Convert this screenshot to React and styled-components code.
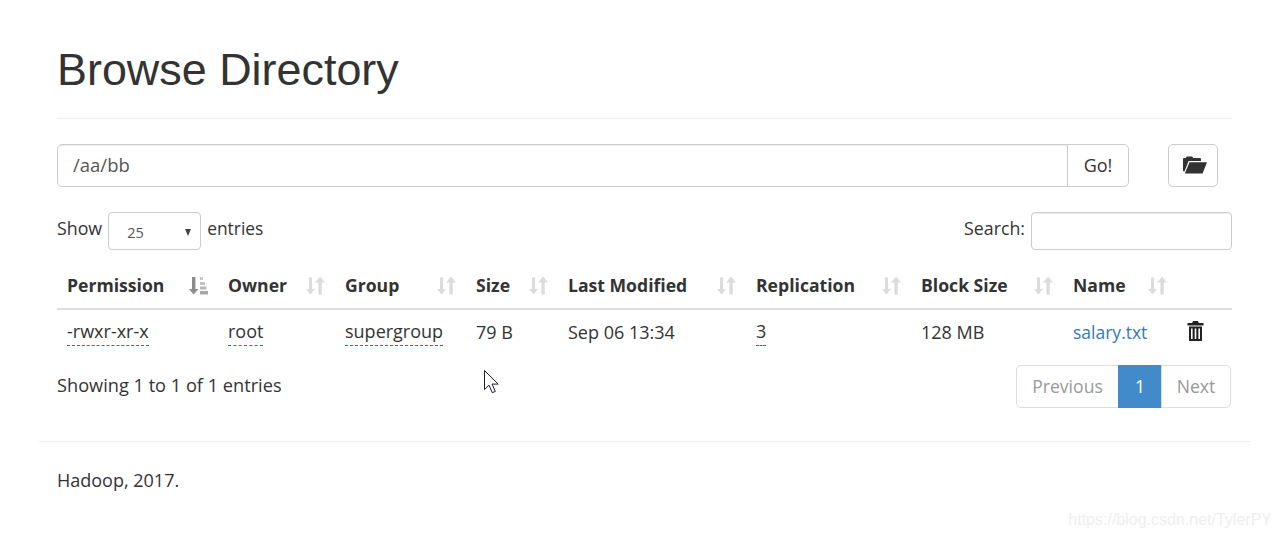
import React from 'react';
import styled, { createGlobalStyle } from 'styled-components';

const GlobalStyle = createGlobalStyle`
  * { box-sizing: border-box; }
  html, body { margin: 0; padding: 0; background: #fff; }
  body {
    font-family: "Open Sans", "Noto Sans", sans-serif;
    font-size: 18px;
    line-height: 25px;
    color: #333;
    height: 538px;
    overflow: hidden;
  }
`;

const Page = styled.div`
  position: relative;
  width: 1281px;
  height: 538px;
  padding: 0 31px 0 39px;
`;

const Content = styled.div`
  padding: 0 18px;
`;

const PageHeader = styled.div`
  padding-top: 39px;
  height: 119px;
  border-bottom: 1px solid #eee;
`;

const Title = styled.h1`
  margin: 0;
  font-family: "Liberation Sans", Arial, sans-serif;
  font-size: 44.9px;
  font-weight: 400;
  line-height: 62px;
  color: #333;
`;

const PathRow = styled.div`
  display: flex;
  margin-top: 25px;
  height: 43px;
`;

const PathInput = styled.div`
  flex: 0 0 1011px;
  padding: 7px 15px;
  border: 1px solid #ccc;
  border-radius: 5px 0 0 5px;
  box-shadow: inset 0 1px 1px rgba(0, 0, 0, 0.075);
  color: #555;
  font-size: 18.5px;
`;

const Button = styled.div`
  display: flex;
  align-items: center;
  justify-content: center;
  border: 1px solid #ccc;
  background: #fff;
`;

const GoButton = styled(Button)`
  width: 62px;
  margin-left: -1px;
  border-radius: 0 5px 5px 0;
`;

const FolderButton = styled(Button)`
  width: 50px;
  margin-left: 39px;
  padding-left: 4px;
  padding-bottom: 2px;
  border-radius: 5px;
`;

const Controls = styled.div`
  display: flex;
  justify-content: space-between;
  align-items: center;
  margin-top: 25px;
  height: 38px;
`;

const Group = styled.div`
  display: flex;
  align-items: center;
  gap: 6px;
`;

const Label = styled.span`
  padding-bottom: 6px;
  font-size: ${(p) => p.$size || 17.8}px;
`;

const Select = styled.div`
  display: flex;
  align-items: center;
  justify-content: space-between;
  width: 93px;
  height: 38px;
  padding: 3px 9px 0 18px;
  border: 1px solid #ccc;
  border-radius: 4px;
  font-size: 14.5px;
  color: #555;
`;

const Caret = styled.span`
  width: 0;
  height: 0;
  border-left: 3.5px solid transparent;
  border-right: 3.5px solid transparent;
  border-top: 7px solid #444;
`;

const SearchBox = styled.div`
  width: 201px;
  height: 38px;
  border: 1px solid #ccc;
  border-radius: 4px;
  box-shadow: inset 0 1px 1px rgba(0, 0, 0, 0.075);
`;

const Table = styled.table`
  width: 1175px;
  margin-top: 15px;
  border-collapse: collapse;
  table-layout: fixed;
`;

const Th = styled.th`
  height: 44px;
  padding: 0 10px 2px;
  border-bottom: 2px solid #ddd;
  text-align: left;
  font-size: 17.6px;
  font-weight: 700;
`;

const ThInner = styled.div`
  display: flex;
  align-items: center;
  justify-content: space-between;
`;

const Td = styled.td`
  height: 49px;
  padding: 0 10px 4px;
  white-space: nowrap;
`;

const IconTd = styled(Td)`
  padding-bottom: 0;
`;

const Dotted = styled.span`
  display: inline-block;
  line-height: 23px;
  padding-bottom: 2px;
  border-bottom: 1px dashed #2a6f9f;
`;

const FileLink = styled.span`
  font-size: 17.5px;
  color: #337ab7;
`;

const Footer = styled.div`
  display: flex;
  justify-content: space-between;
  align-items: flex-start;
  margin-top: 7px;
`;

const Info = styled.div`
  padding-top: 8px;
  font-size: 18.2px;
`;

const Pagination = styled.div`
  display: flex;
  height: 43px;
  margin-right: 1px;
  font-size: 17.6px;
`;

const PageItem = styled.div`
  display: flex;
  align-items: center;
  justify-content: center;
  width: ${(p) => p.$w}px;
  margin-left: -1px;
  border: 1px solid ${(p) => (p.$active ? '#428bca' : '#ddd')};
  border-radius: ${(p) => p.$radius || '0'};
  background: ${(p) => (p.$active ? '#428bca' : '#fff')};
  color: ${(p) => (p.$active ? '#fff' : '#999')};
`;

const Divider = styled.hr`
  margin: 33px 0 0;
  border: 0;
  border-top: 1px solid #eee;
`;

const Copyright = styled.p`
  margin: 26px 18px 0;
`;

const Cursor = styled.svg`
  position: absolute;
  left: 483px;
  top: 369px;
`;

const Watermark = styled.div`
  position: absolute;
  right: 9px;
  top: 508px;
  font-family: "Liberation Sans", Arial, sans-serif;
  font-size: 16px;
  line-height: 24px;
  color: #eeeeee;
`;

const SortIcon = ({ active }) => (
  <svg width="19" height="19" viewBox="0 0 19 19" style={{ flex: 'none' }}>
    {active ? (
      <g>
        <path fill="#8c8c8c" d="M3 1h3.400v12h3L4.700 18.500 0 13h3z" />
        <rect x="11" y="1" width="3" height="3" fill="#c8c8c8" />
        <rect x="11" y="6" width="5" height="3" fill="#c0c0c0" />
        <rect x="11" y="10.500" width="6.500" height="3" fill="#b8b8b8" />
        <rect x="11" y="15" width="8" height="3.500" fill="#a8a8a8" />
      </g>
    ) : (
      <g fill="#dcdcdc">
        <path d="M3 1.500h3v11.500h3L4.500 18.500 0 13h3z" />
        <path d="M14 .5L19 6.500h-3.200v12h-3.400v-12H9.200z" />
      </g>
    )}
  </svg>
);

const FolderIcon = () => (
  <svg width="24" height="18" viewBox="0 0 24 18">
    <path
      fill="#333"
      d="M0 3.200C0 2.500.5 2 1.200 2h1.600L3.800.5h5.400l1 1.500h6.600c.7 0 1.200.5 1.200 1.200V5H5.600L1.500 15.500 0 15zM6.500 6.300H24L19.600 17.500H1.800z"
    />
  </svg>
);

const TrashIcon = () => (
  <svg width="17" height="20" viewBox="0 0 17 20">
    <path
      fill="#222"
      fillRule="evenodd"
      d="M6 0h5l.8 2H16.500v2.500H.5V2h4.700zM2 5.500h13V19.200c0 .5-.3.800-.8.800H2.800c-.5 0-.8-.3-.8-.8zM4 7.500v10.500h1.600V7.500zM7.700 7.500v10.500h1.600V7.500zM11.400 7.500v10.500H13V7.500z"
    />
  </svg>
);

const columns = [
  { name: 'Permission', width: 161, active: true },
  { name: 'Owner', width: 117 },
  { name: 'Group', width: 131 },
  { name: 'Size', width: 92 },
  { name: 'Last Modified', width: 188 },
  { name: 'Replication', width: 165 },
  { name: 'Block Size', width: 152 },
  { name: 'Name', width: 114 },
];

export default function App() {
  return (
    <>
      <GlobalStyle />
      <Page>
        <Content>
          <PageHeader>
            <Title>Browse Directory</Title>
          </PageHeader>

          <PathRow>
            <PathInput>/aa/bb</PathInput>
            <GoButton>Go!</GoButton>
            <FolderButton>
              <FolderIcon />
            </FolderButton>
          </PathRow>

          <Controls>
            <Group>
              <Label>Show</Label>
              <Select>
                25
                <Caret />
              </Select>
              <Label $size={17.4}>entries</Label>
            </Group>
            <Group>
              <Label>Search:</Label>
              <SearchBox />
            </Group>
          </Controls>

          <Table>
            <colgroup>
              {columns.map((c) => (
                <col key={c.name} width={c.width} />
              ))}
              <col width={55} />
            </colgroup>
            <thead>
              <tr>
                {columns.map((c) => (
                  <Th key={c.name}>
                    <ThInner>
                      {c.name}
                      <SortIcon active={c.active} />
                    </ThInner>
                  </Th>
                ))}
                <Th />
              </tr>
            </thead>
            <tbody>
              <tr>
                <Td><Dotted>-rwxr-xr-x</Dotted></Td>
                <Td><Dotted>root</Dotted></Td>
                <Td><Dotted>supergroup</Dotted></Td>
                <Td>79 B</Td>
                <Td>Sep 06 13:34</Td>
                <Td><Dotted>3</Dotted></Td>
                <Td>128 MB</Td>
                <Td><FileLink>salary.txt</FileLink></Td>
                <IconTd><TrashIcon /></IconTd>
              </tr>
            </tbody>
          </Table>

          <Footer>
            <Info>Showing 1 to 1 of 1 entries</Info>
            <Pagination>
              <PageItem $w={103} $radius="5px 0 0 5px">Previous</PageItem>
              <PageItem $w={44} $active>1</PageItem>
              <PageItem $w={70} $radius="0 5px 5px 0">Next</PageItem>
            </Pagination>
          </Footer>
        </Content>

        <Divider />
        <Copyright>Hadoop, 2017.</Copyright>

        <Cursor width="18" height="26" viewBox="0 0 18 26">
          <path d="M1.500 1.500v19l4.500-4.300 3.300 7.500 3-1.300-3.300-7.300h6.200z" fill="#fff" stroke="#1c1c2a" strokeWidth="1" />
        </Cursor>
        <Watermark>https://blog.csdn.net/TylerPY</Watermark>
      </Page>
    </>
  );
}
